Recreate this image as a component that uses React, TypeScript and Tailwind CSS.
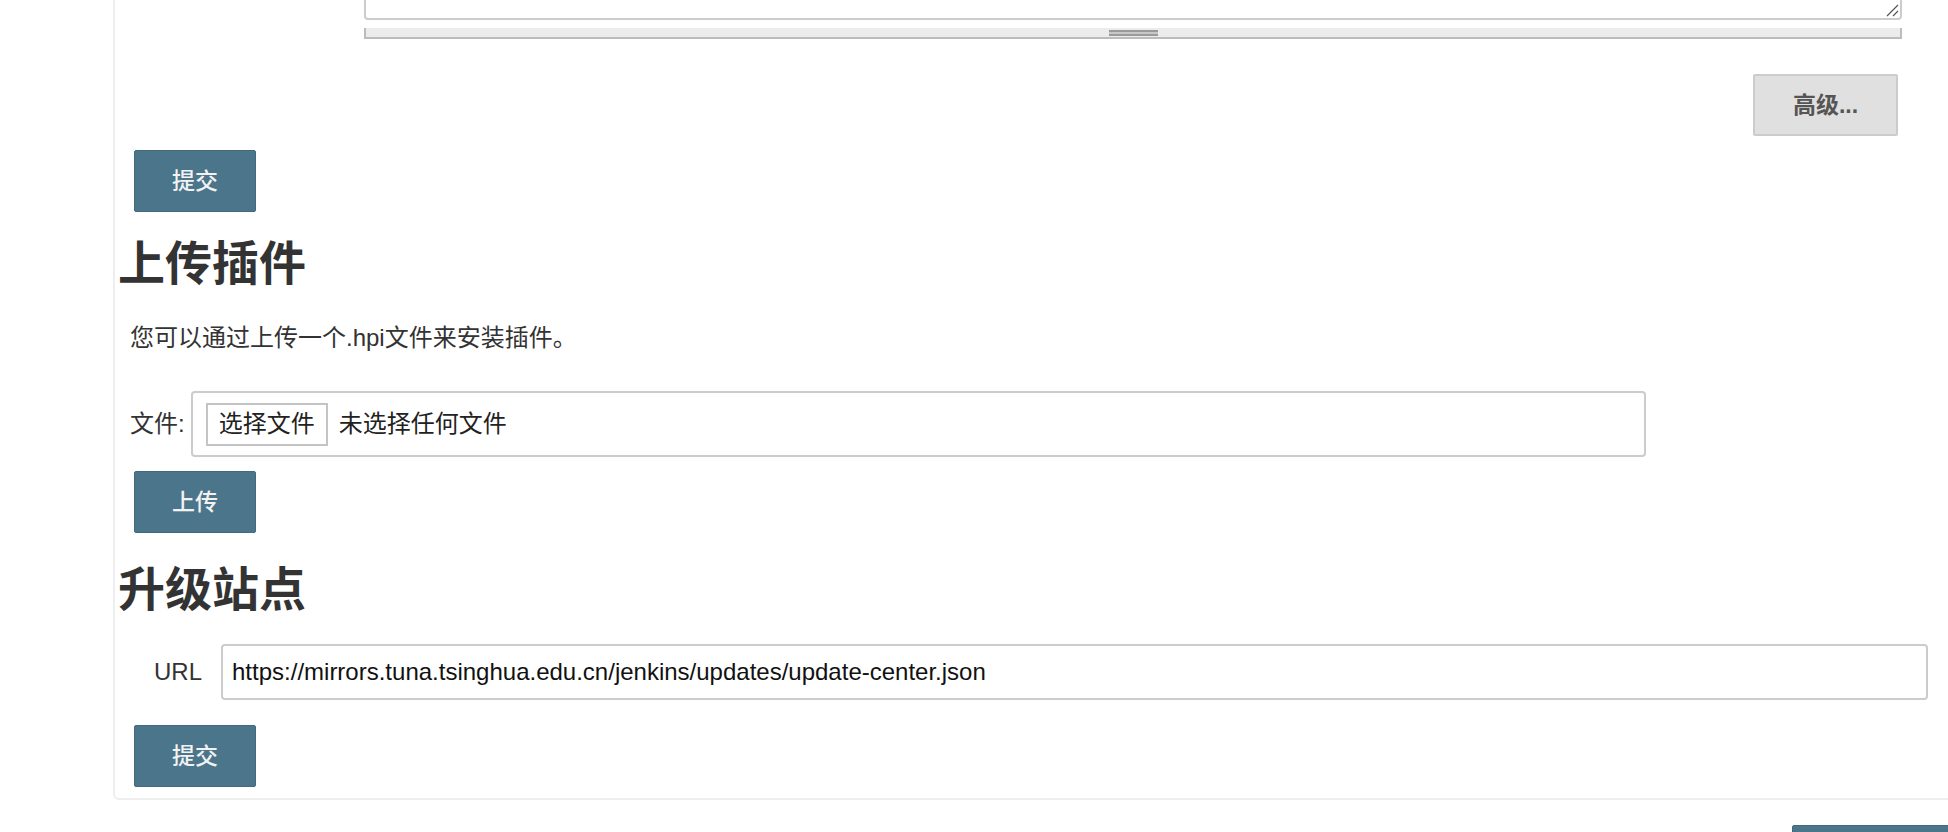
const BlueButton = ({ label, className = "" }: { label: string; className?: string }) => {
  return (
    <button
      className={
        "flex h-[62px] w-[122px] items-center justify-center rounded-[2px] border border-[#44697d] bg-[#4b758b] text-[23px] font-medium text-[#f2f2f2] " +
        className
      }
    >
      {label}
    </button>
  );
};

const App = () => {
  return (
    <div className="relative h-[832px] w-[1948px] overflow-hidden bg-white font-['Liberation_Sans','Noto_Sans_CJK_SC',sans-serif] text-[#333]">
      <div className="ml-[113px] mt-[-82px] w-[2100px] rounded-[6px] border-2 border-[#eeeeee] pb-[11px]">
        {/* textarea remains from the section above */}
        <div className="flex">
          <div className="w-[249px] shrink-0" />
          <div className="w-[1538px]">
            <div className="relative h-[100px] rounded-[4px] border-2 border-[#cccccc] bg-white">
              <svg
                className="absolute bottom-[1px] right-[1px]"
                width="14"
                height="14"
                viewBox="0 0 14 14"
              >
                <path d="M2 13 L13 2 M8 13 L13 8" stroke="#555" strokeWidth="1.2" />
              </svg>
            </div>
            <div className="mt-[8px] flex h-[11px] items-center justify-center border-x-2 border-b-2 border-[#bcbcbc] bg-[#ececec]">
              <div className="h-[6px] w-[49px] border-y-2 border-[#9a9a9a] bg-[#c8c8c8]" />
            </div>
          </div>
        </div>

        <div className="mt-[35px] flex w-[1783px] justify-end">
          <button className="flex h-[62px] w-[145px] items-center justify-center rounded-[2px] border-2 border-[#cccccc] bg-[#e0e0e0] text-[23px] font-semibold text-[#555]">
            高级...
          </button>
        </div>

        <BlueButton label="提交" className="ml-[19px] mt-[14px]" />

        <h1 className="ml-[3px] mt-[28px] text-[47px] font-bold leading-[47px] text-[#333]">上传插件</h1>

        <p className="ml-[15px] mt-[39px] text-[24px] leading-[24px]">您可以通过上传一个.hpi文件来安装插件。</p>

        <div className="ml-[15px] mt-[41px] flex items-center gap-[6px]">
          <span className="text-[24px]">文件:</span>
          <div className="flex h-[66px] w-[1455px] items-center gap-[11px] rounded-[4px] border-2 border-[#cccccc] pl-[13px]">
            <button className="flex h-[43px] w-[122px] items-center justify-center border-2 border-[#c4c4c4] bg-white text-[24px] text-[#222]">
              选择文件
            </button>
            <span className="text-[24px] text-[#222]">未选择任何文件</span>
          </div>
        </div>

        <BlueButton label="上传" className="ml-[19px] mt-[14px]" />

        <h1 className="ml-[3px] mt-[33px] text-[47px] font-bold leading-[47px] text-[#333]">升级站点</h1>

        <div className="ml-[39px] mt-[31px] flex items-center gap-[19px]">
          <span className="text-[24px]">URL</span>
          <input
            readOnly
            value="https://mirrors.tuna.tsinghua.edu.cn/jenkins/updates/update-center.json"
            className="h-[56px] w-[1707px] rounded-[4px] border-2 border-[#cccccc] px-[9px] text-[24px] text-[#111] outline-none"
          />
        </div>

        <BlueButton label="提交" className="ml-[19px] mt-[25px]" />
      </div>

      <div className="ml-[1792px] mt-[25px] h-[40px] w-[200px] rounded-[2px] border border-[#44697d] bg-[#4b758b]" />
    </div>
  );
};

export default App;
